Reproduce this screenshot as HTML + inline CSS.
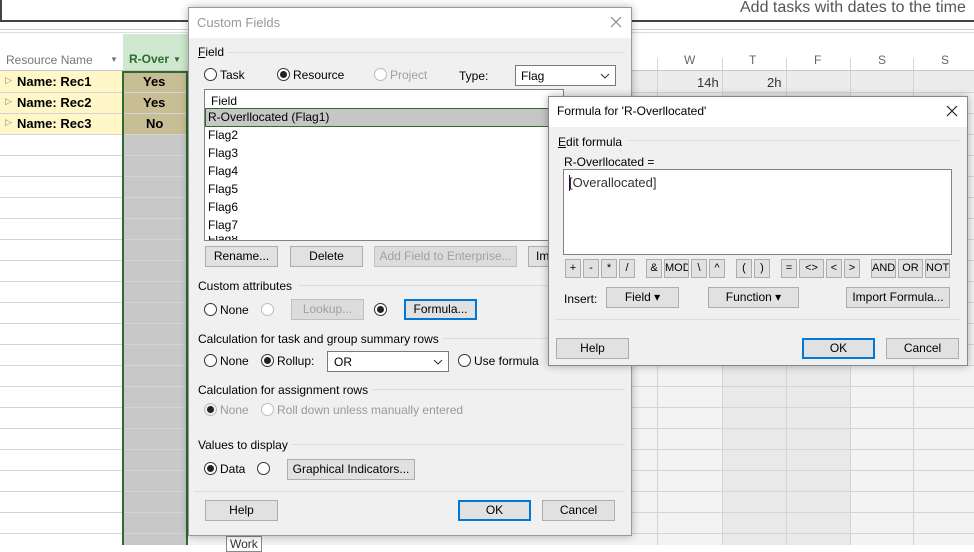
<!DOCTYPE html>
<html><head><meta charset="utf-8"><style>
*{box-sizing:border-box}
body{margin:0;width:974px;height:545px;overflow:hidden;background:#fff;font-family:"Liberation Sans",sans-serif;font-size:12px;color:#000;position:relative}
.a{position:absolute}
.btn{position:absolute;background:#e1e1e1;border:1px solid #adadad;text-align:center;font-size:12px;line-height:19px;height:21px}
.btn.dis{color:#a0a0a0;background:#dcdcdc;border-color:#bfbfbf}
.btn.f{border:2px solid #0078d7;line-height:17px}
.r{position:absolute;width:13px;height:13px;border:1px solid #333;border-radius:50%;background:#fff}
.r.on::after{content:"";position:absolute;left:2px;top:2px;width:7px;height:7px;border-radius:50%;background:#222}
.r.dis{border-color:#bcbcbc}
.grp{position:absolute;height:1px;background:#dcdcdc}
.gl{position:absolute;color:#000}
.hl{position:absolute;height:1px;background:#d4d4d4;left:0;width:974px}
.vl{position:absolute;width:1px;background:#d4d4d4}
.sb{position:absolute;border:1px solid #adadad;background:#e1e1e1;height:19px;font-size:11px;text-align:center;line-height:17px}
</style></head><body>
<div class="a" style="left:0;top:0;width:974px;height:22px;border-bottom:2px solid #444;border-left:2px solid #444"></div>
<div class="a" style="left:740px;top:-1px;font-size:16px;color:#555">Add tasks with dates to the time</div>
<div class="a" style="left:0;top:29px;width:974px;height:1px;background:#ccc"></div>
<div class="a" style="left:0;top:32px;width:974px;height:1px;background:#ddd"></div>
<div class="a" style="left:188px;top:70px;width:786px;height:475px;background:#f3f3f3"></div>
<div class="a" style="left:722px;top:70px;width:128px;height:475px;background:#e9e9e9"></div>
<div class="a" style="left:188px;top:70px;width:786px;height:21px;background:#ececec"></div>
<div class="a" style="left:123px;top:34px;width:65px;height:36px;background:#cfe8cf"></div>
<div class="a" style="left:6px;top:53px;color:#777">Resource Name</div>
<div class="a" style="left:110px;top:55px;color:#777;font-size:8px">▼</div>
<div class="a" style="left:129px;top:52px;color:#2d6a2d;font-weight:bold">R-Over</div>
<div class="a" style="left:173px;top:55px;color:#2d6a2d;font-size:8px">▼</div>
<div class="a" style="left:684px;top:53px;color:#666">W</div>
<div class="a" style="left:749px;top:53px;color:#666">T</div>
<div class="a" style="left:814px;top:53px;color:#666">F</div>
<div class="a" style="left:878px;top:53px;color:#666">S</div>
<div class="a" style="left:941px;top:53px;color:#666">S</div>
<div class="vl" style="left:657px;top:58px;height:487px"></div>
<div class="vl" style="left:722px;top:58px;height:487px"></div>
<div class="vl" style="left:786px;top:58px;height:487px"></div>
<div class="vl" style="left:850px;top:58px;height:487px"></div>
<div class="vl" style="left:913px;top:58px;height:487px"></div>
<div class="a" style="left:697px;top:75px;font-size:13px;color:#333">14h</div>
<div class="a" style="left:767px;top:75px;font-size:13px;color:#333">2h</div>
<div class="a" style="left:0;top:71px;width:123px;height:63px;background:#fff7c8"></div>
<div class="a" style="left:123px;top:71px;width:65px;height:474px;background:#c8c8c8"></div>
<div class="a" style="left:123px;top:71px;width:65px;height:63px;background:#c7be96"></div>
<div class="hl" style="top:70px;background:#c8c8c8"></div>
<div class="hl" style="top:92px"></div><div class="hl" style="top:113px"></div><div class="hl" style="top:134px"></div>
<div class="hl" style="top:155px"></div><div class="hl" style="top:176px"></div><div class="hl" style="top:197px"></div>
<div class="hl" style="top:218px"></div><div class="hl" style="top:239px"></div><div class="hl" style="top:260px"></div>
<div class="hl" style="top:281px"></div><div class="hl" style="top:302px"></div><div class="hl" style="top:323px"></div>
<div class="hl" style="top:344px"></div><div class="hl" style="top:365px"></div><div class="hl" style="top:386px"></div>
<div class="hl" style="top:407px"></div><div class="hl" style="top:428px"></div><div class="hl" style="top:449px"></div>
<div class="hl" style="top:470px"></div><div class="hl" style="top:491px"></div><div class="hl" style="top:512px"></div>
<div class="hl" style="top:533px"></div>
<div class="a" style="left:122px;top:71px;width:66px;height:474px;border:2px solid #2e6b2e;border-bottom:none"></div>
<div class="a" style="left:5px;top:75px;font-size:9px;color:#888">▷</div><div class="a" style="left:17px;top:74px;font-weight:bold;font-size:13px">Name: Rec1</div>
<div class="a" style="left:5px;top:96px;font-size:9px;color:#888">▷</div><div class="a" style="left:17px;top:95px;font-weight:bold;font-size:13px">Name: Rec2</div>
<div class="a" style="left:5px;top:117px;font-size:9px;color:#888">▷</div><div class="a" style="left:17px;top:116px;font-weight:bold;font-size:13px">Name: Rec3</div>
<div class="a" style="left:143px;top:74px;font-weight:bold;font-size:13px">Yes</div>
<div class="a" style="left:143px;top:95px;font-weight:bold;font-size:13px">Yes</div>
<div class="a" style="left:146px;top:116px;font-weight:bold;font-size:13px">No</div>
<div class="a" style="left:226px;top:536px;font-size:12px;color:#333;border:1px solid #888;padding:0 3px;background:#fff">Work</div>

<!-- Custom Fields dialog -->
<div class="a" style="left:188px;top:7px;width:444px;height:529px;background:#f0f0f0;border:1px solid #999;box-shadow:0 0 8px rgba(0,0,0,.3)"></div>
<div class="a" style="left:189px;top:8px;width:442px;height:30px;background:#fff"></div>
<div class="a" style="left:197px;top:15px;color:#999;font-size:13px">Custom Fields</div>
<svg class="a" style="left:610px;top:16px" width="12" height="12"><path d="M1 1L11 11M11 1L1 11" stroke="#888" stroke-width="1.2"/></svg>
<div class="gl" style="left:198px;top:45px"><u>F</u>ield</div><div class="grp" style="left:228px;top:52px;width:397px"></div>
<div class="r" style="left:204px;top:68px"></div><div class="a" style="left:220px;top:68px">Task</div>
<div class="r on" style="left:277px;top:68px"></div><div class="a" style="left:293px;top:68px">Resource</div>
<div class="r dis" style="left:374px;top:68px"></div><div class="a" style="left:390px;top:68px;color:#a0a0a0">Project</div>
<div class="a" style="left:459px;top:69px">Type:</div>
<div class="a" style="left:515px;top:65px;width:101px;height:21px;border:1px solid #7a7a7a;background:#fff;padding:3px 5px">Flag<svg style="position:absolute;right:5px;top:7px" width="10" height="6"><path d="M1 1L5 5L9 1" stroke="#333" fill="none"/></svg></div>
<div class="a" style="left:204px;top:89px;width:360px;height:152px;background:#fff;border:1px solid #828282"></div>
<div class="a" style="left:211px;top:94px">Field</div>
<div class="a" style="left:205px;top:108px;width:344px;height:19px;background:#c6c6c6;border:1px solid #2e6b2e"></div>
<div class="a" style="left:208px;top:110px">R-Overllocated (Flag1)</div>
<div class="a" style="left:208px;top:128px">Flag2</div>
<div class="a" style="left:208px;top:146px">Flag3</div>
<div class="a" style="left:208px;top:164px">Flag4</div>
<div class="a" style="left:208px;top:182px">Flag5</div>
<div class="a" style="left:208px;top:200px">Flag6</div>
<div class="a" style="left:208px;top:218px">Flag7</div>
<div class="a" style="left:205px;top:236px;width:340px;height:4px;overflow:hidden"><div style="margin-top:-4px;padding-left:3px">Flag8</div></div>
<div class="btn" style="left:205px;top:246px;width:73px">Rename...</div>
<div class="btn" style="left:290px;top:246px;width:73px">Delete</div>
<div class="btn dis" style="left:374px;top:246px;width:143px">Add Field to Enterprise...</div>
<div class="btn" style="left:528px;top:246px;width:30px;text-align:left;padding-left:7px">Im</div>
<div class="gl" style="left:198px;top:279px">Custom attributes</div><div class="grp" style="left:298px;top:285px;width:327px"></div>
<div class="r" style="left:204px;top:303px"></div><div class="a" style="left:220px;top:303px">None</div>
<div class="r dis" style="left:261px;top:303px"></div>
<div class="btn dis" style="left:291px;top:299px;width:73px">Lookup...</div>
<div class="r on" style="left:374px;top:303px"></div>
<div class="btn f" style="left:404px;top:299px;width:73px">Formula...</div>
<div class="gl" style="left:198px;top:332px">Calculation for task and group summary rows</div><div class="grp" style="left:442px;top:338px;width:183px"></div>
<div class="r" style="left:204px;top:354px"></div><div class="a" style="left:220px;top:354px">None</div>
<div class="r on" style="left:261px;top:354px"></div><div class="a" style="left:277px;top:354px">Rollup:</div>
<div class="a" style="left:327px;top:351px;width:122px;height:21px;border:1px solid #7a7a7a;background:#fff;padding:3px 6px">OR<svg style="position:absolute;right:5px;top:7px" width="10" height="6"><path d="M1 1L5 5L9 1" stroke="#333" fill="none"/></svg></div>
<div class="r" style="left:458px;top:354px"></div><div class="a" style="left:474px;top:354px">Use formula</div>
<div class="gl" style="left:198px;top:383px">Calculation for assignment rows</div><div class="grp" style="left:372px;top:389px;width:253px"></div>
<div class="r dis on" style="left:204px;top:403px;background:#eee"></div><div class="a" style="left:220px;top:403px;color:#999">None</div>
<div class="r dis" style="left:261px;top:403px"></div><div class="a" style="left:277px;top:403px;color:#999">Roll down unless manually entered</div>
<div class="gl" style="left:198px;top:438px">Values to display</div><div class="grp" style="left:292px;top:444px;width:333px"></div>
<div class="r on" style="left:204px;top:462px"></div><div class="a" style="left:220px;top:462px">Data</div>
<div class="r" style="left:257px;top:462px"></div>
<div class="btn" style="left:287px;top:459px;width:128px">Graphical Indicators...</div>
<div class="grp" style="left:194px;top:491px;width:431px"></div>
<div class="btn" style="left:205px;top:500px;width:73px">Help</div>
<div class="btn f" style="left:458px;top:500px;width:73px">OK</div>
<div class="btn" style="left:542px;top:500px;width:73px">Cancel</div>

<!-- Formula dialog -->
<div class="a" style="left:548px;top:96px;width:420px;height:270px;background:#f0f0f0;border:1px solid #888;box-shadow:0 0 8px rgba(0,0,0,.3)"></div>
<div class="a" style="left:549px;top:97px;width:418px;height:30px;background:#fff"></div>
<div class="a" style="left:557px;top:104px;font-size:12px">Formula for 'R-Overllocated'</div>
<svg class="a" style="left:946px;top:105px" width="12" height="12"><path d="M1 1L11 11M11 1L1 11" stroke="#222" stroke-width="1.2"/></svg>
<div class="gl" style="left:558px;top:135px"><u>E</u>dit formula</div><div class="grp" style="left:627px;top:140px;width:333px"></div>
<div class="a" style="left:564px;top:155px">R-Overllocated =</div>
<div class="a" style="left:563px;top:169px;width:389px;height:86px;background:#fff;border:1px solid #828282"></div>
<div class="a" style="left:569px;top:175px;font-size:13px;color:#333">[Overallocated]</div>
<div class="a" style="left:569px;top:175px;width:1px;height:16px;background:#306"></div>
<div class="sb" style="left:565px;top:259px;width:16px">+</div>
<div class="sb" style="left:583px;top:259px;width:16px">-</div>
<div class="sb" style="left:601px;top:259px;width:16px">*</div>
<div class="sb" style="left:619px;top:259px;width:16px">/</div>
<div class="sb" style="left:646px;top:259px;width:16px">&amp;</div>
<div class="sb" style="left:664px;top:259px;width:25px;overflow:hidden">MOD</div>
<div class="sb" style="left:691px;top:259px;width:16px">\</div>
<div class="sb" style="left:709px;top:259px;width:16px">^</div>
<div class="sb" style="left:736px;top:259px;width:16px">(</div>
<div class="sb" style="left:754px;top:259px;width:16px">)</div>
<div class="sb" style="left:781px;top:259px;width:16px">=</div>
<div class="sb" style="left:799px;top:259px;width:25px">&lt;&gt;</div>
<div class="sb" style="left:826px;top:259px;width:16px">&lt;</div>
<div class="sb" style="left:844px;top:259px;width:16px">&gt;</div>
<div class="sb" style="left:871px;top:259px;width:25px">AND</div>
<div class="sb" style="left:898px;top:259px;width:25px">OR</div>
<div class="sb" style="left:925px;top:259px;width:25px">NOT</div>
<div class="a" style="left:564px;top:292px">Insert:</div>
<div class="btn" style="left:606px;top:287px;width:73px">Field ▾</div>
<div class="btn" style="left:708px;top:287px;width:91px">Function ▾</div>
<div class="btn" style="left:846px;top:287px;width:104px">Import Formula...</div>
<div class="grp" style="left:555px;top:319px;width:405px"></div>
<div class="btn" style="left:556px;top:338px;width:73px">Help</div>
<div class="btn f" style="left:802px;top:338px;width:73px">OK</div>
<div class="btn" style="left:886px;top:338px;width:73px">Cancel</div>
</body></html>
